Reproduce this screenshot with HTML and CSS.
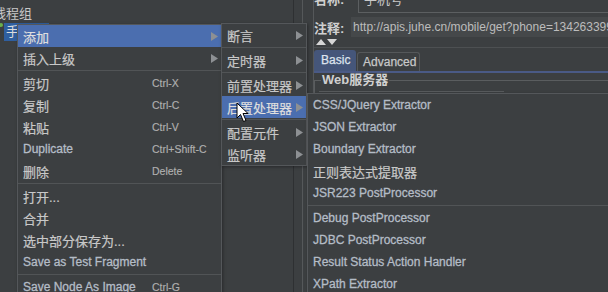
FILE: index.html
```html
<!DOCTYPE html>
<html>
	<head>
		<meta charset="UTF-8">
		<title>JMeter</title>
		<link rel="stylesheet" href="styles.css">
	</head>
	<body>
		<div class="app">
			<div class="tree">
				<div class="tree-row group">线程组</div>
				<div class="tree-row node"><span class="dot"></span><span class="sel">手机号</span></div>
			</div>
			<div class="splitter"></div>
			<div class="editor">
				<div class="field-row name">
					<span class="label">名称:</span>
					<div class="field">手机号</div>
				</div>
				<div class="field-row comment">
					<span class="label">注释:</span>
					<div class="field area">http://apis.juhe.cn/mobile/get?phone=13426339999&amp;key=</div>
				</div>
				<div class="toggle">
					<svg width="22" height="6" viewBox="0 0 22 6"><path d="M0 6L5 0L10 6Z M11 0L21 0L16 6Z" fill="#d6d6d6"/></svg>
				</div>
				<div class="tabpane">
					<div class="tabs">
						<span class="tab active">Basic</span>
						<span class="tab">Advanced</span>
					</div>
					<div class="tab-line"></div>
					<fieldset class="group-box">
						<legend>Web服务器</legend>
						<div class="inner"></div>
					</fieldset>
				</div>
			</div>
		</div>

		<!-- 右键菜单 -->
		<div class="menu main">
			<div class="item on"><span class="label">添加</span><svg class="arr" viewBox="0 0 7 9"><path d="M0 0L7 4.5L0 9Z"/></svg></div>
			<div class="item"><span class="label">插入上级</span><svg class="arr" viewBox="0 0 7 9"><path d="M0 0L7 4.5L0 9Z"/></svg></div>
			<div class="sep"></div>
			<div class="item"><span class="label">剪切</span><span class="key">Ctrl-X</span></div>
			<div class="item"><span class="label">复制</span><span class="key">Ctrl-C</span></div>
			<div class="item"><span class="label">粘贴</span><span class="key">Ctrl-V</span></div>
			<div class="item en"><span class="label">Duplicate</span><span class="key">Ctrl+Shift-C</span></div>
			<div class="item"><span class="label">删除</span><span class="key">Delete</span></div>
			<div class="sep"></div>
			<div class="item"><span class="label">打开...</span></div>
			<div class="item"><span class="label">合并</span></div>
			<div class="item"><span class="label">选中部分保存为...</span></div>
			<div class="item en"><span class="label">Save as Test Fragment</span></div>
			<div class="sep"></div>
			<div class="item en"><span class="label">Save Node As Image</span><span class="key">Ctrl-G</span></div>
		</div>

		<div class="menu sub">
			<div class="item"><span class="label">断言</span><svg class="arr" viewBox="0 0 7 9"><path d="M0 0L7 4.5L0 9Z"/></svg></div>
			<div class="sep"></div>
			<div class="item"><span class="label">定时器</span><svg class="arr" viewBox="0 0 7 9"><path d="M0 0L7 4.5L0 9Z"/></svg></div>
			<div class="sep"></div>
			<div class="item"><span class="label">前置处理器</span><svg class="arr" viewBox="0 0 7 9"><path d="M0 0L7 4.5L0 9Z"/></svg></div>
			<div class="item on"><span class="label">后置处理器</span><svg class="arr" viewBox="0 0 7 9"><path d="M0 0L7 4.5L0 9Z"/></svg></div>
			<div class="sep"></div>
			<div class="item"><span class="label">配置元件</span><svg class="arr" viewBox="0 0 7 9"><path d="M0 0L7 4.5L0 9Z"/></svg></div>
			<div class="item"><span class="label">监听器</span><svg class="arr" viewBox="0 0 7 9"><path d="M0 0L7 4.5L0 9Z"/></svg></div>
		</div>

		<div class="menu post">
			<div class="item en">CSS/JQuery Extractor</div>
			<div class="item en">JSON Extractor</div>
			<div class="item en">Boundary Extractor</div>
			<div class="item">正则表达式提取器</div>
			<div class="item en">JSR223 PostProcessor</div>
			<div class="sep"></div>
			<div class="item en">Debug PostProcessor</div>
			<div class="item en">JDBC PostProcessor</div>
			<div class="item en">Result Status Action Handler</div>
			<div class="item en">XPath Extractor</div>
		</div>

		<svg class="cursor" width="14" height="21" viewBox="0 0 14 21">
			<path d="M1 1L1 16L4.5 12.5L7.5 19.5L10 18.5L7 11.5L12 11.5Z" fill="#fff" stroke="#000" stroke-width="1" stroke-linejoin="round"/>
		</svg>
	</body>
</html>
```

FILE: styles.css
```css
body {
	margin: 0;
	width: 608px;
	height: 292px;
	overflow: hidden;
	position: relative;
	background-color: #3c3f41;
	color: #c4c4c4;
	font: 13px "Liberation Sans", "Noto Sans CJK SC", sans-serif;
}
.app {
	display: flex;
	width: 660px;
	height: 292px;
}

/* 左侧树 */
.tree {
	width: 311px;
	padding-top: 3px;
	border-right: 1px solid #2e3032;
	overflow: hidden;
}
.tree-row {
	height: 19px;
	display: flex;
	align-items: center;
	white-space: nowrap;
}
.tree-row.group {
	margin-left: -7px;
	color: #c8c8c8;
}
.dot {
	display: inline-block;
	width: 4px;
	height: 4px;
	margin-left: -1px;
	border-radius: 50%;
	background-color: #6ab04c;
	align-self: flex-start;
	margin-top: 1px;
}
.sel {
	height: 18px;
	line-height: 18px;
	padding: 0 4px 0 2px;
	margin-left: 1px;
	background-color: #2f5fa0;
	color: #dcdcdc;
}
.splitter {
	width: 9px;
	border-right: 1px solid #55585a;
}

/* 右侧编辑区 */
.editor {
	flex: 1;
	margin-left: 10px;
	border-left: 1px solid #55585a;
}
.field-row {
	display: flex;
	align-items: center;
	white-space: nowrap;
}
.field-row .label {
	flex: none;
	color: #d0d0d0;
	font-weight: bold;
}
.field-row.name {
	height: 22px;
	margin-top: -9px;
	align-items: flex-start;
}
.field-row.name .label {
	width: 44px;
	line-height: 16px;
	margin-top: 1px;
}
.field-row.name .field {
	flex: 1;
	height: 22px;
	box-sizing: border-box;
	padding-left: 5px;
	line-height: 16px;
	border: 1px solid #5c5f61;
	border-right: none;
	color: #c8c8c8;
}
.field-row.comment {
	height: 20px;
	margin-top: 4px;
}
.field-row.comment .label {
	width: 37px;
}
.field.area {
	flex: 1;
	height: 20px;
	line-height: 20px;
	padding-left: 2px;
	background-color: #45484a;
	font-size: 12px;
	color: #bcbcbc;
	overflow: hidden;
}
.toggle {
	height: 10px;
	padding-left: 2px;
	display: flex;
	align-items: center;
}
.tabpane {
	border-top: 1px solid #4d5052;
	padding-top: 2px;
}
.tabs {
	display: flex;
	align-items: flex-end;
	height: 21px;
	font-size: 12px;
}
.tab {
	height: 18px;
	line-height: 18px;
	width: 56px;
	margin-left: 1px;
	padding-left: 5px;
	border: 1px solid #55585a;
	border-bottom: none;
	border-radius: 3px 3px 0 0;
	color: #c8c8c8;
	-webkit-text-stroke: 0.25px #c8c8c8;
}
.tab.active {
	height: 21px;
	line-height: 21px;
	width: 35px;
	margin-left: 0;
	padding-left: 7px;
	border: none;
	background-color: #45567a;
	color: #dde4ee;
	-webkit-text-stroke: 0.25px #dde4ee;
}
.tab-line {
	height: 2px;
	background-color: #4a5a86;
}
.group-box {
	margin: 0;
	padding: 0 4px 20px;
	border: 1px solid #5a5d5f;
}
.group-box legend {
	margin-left: 2px;
	padding: 0 1px;
	line-height: 14px;
	color: #d0d0d0;
	font-weight: bold;
}
.group-box .inner {
	width: 185px;
	margin-top: 4px;
	border-top: 1px solid #585b5d;
}

/* 弹出菜单 */
.menu {
	position: absolute;
	background-color: #3c3f41;
	border: 1px solid #54575a;
	box-shadow: 1px 1px 3px rgba(0, 0, 0, 0.35);
}
.menu.main {
	left: 17px;
	top: 24px;
	width: 203px;
}
.menu.sub {
	left: 221px;
	top: 23px;
	width: 84px;
}
.menu.post {
	left: 307px;
	top: 93px;
	width: 320px;
}
.item {
	height: 22px;
	display: flex;
	align-items: center;
	padding: 0 3px 0 5px;
	white-space: nowrap;
	color: #c8c8c8;
	-webkit-text-stroke: 0.2px #c8c8c8;
}
.item.en {
	font-size: 12px;
	color: #b4bcc6;
	-webkit-text-stroke: 0.3px #b4bcc6;
}
.item.on {
	background-color: #4b6eaf;
	color: #e6e6e6;
}
.menu.main .label {
	width: 129px;
}
.key {
	font-size: 10.5px;
	color: #b0b0b0;
	-webkit-text-stroke: 0.15px #b0b0b0;
}
.arr {
	width: 7px;
	height: 9px;
	margin-left: auto;
	fill: #8d9093;
}
.sep {
	height: 1px;
	margin: 1px 0;
	background-color: #515456;
}
.cursor {
	position: absolute;
	left: 236px;
	top: 102px;
}
```
